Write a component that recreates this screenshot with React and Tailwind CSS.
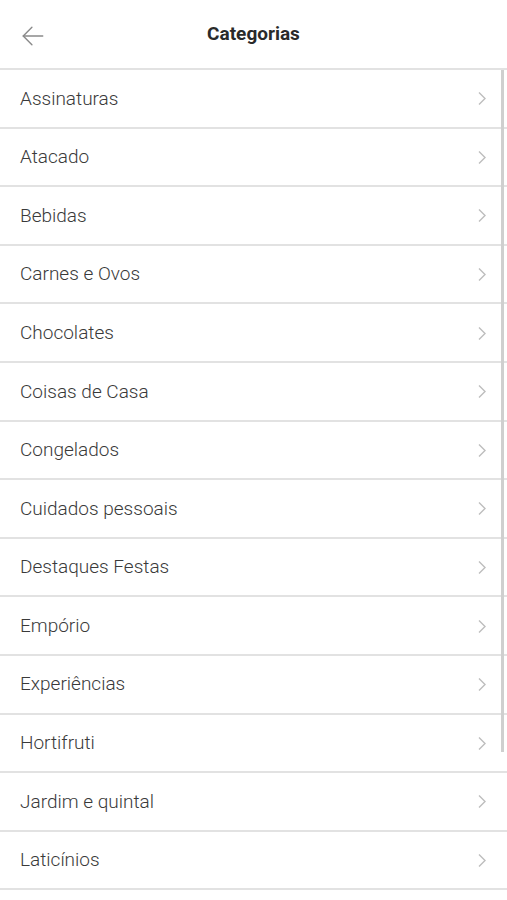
import React from "react";

const categories = [
  "Assinaturas",
  "Atacado",
  "Bebidas",
  "Carnes e Ovos",
  "Chocolates",
  "Coisas de Casa",
  "Congelados",
  "Cuidados pessoais",
  "Destaques Festas",
  "Empório",
  "Experiências",
  "Hortifruti",
  "Jardim e quintal",
  "Laticínios",
];

const App = () => {
  return (
    <div className="relative h-[900px] w-[507px] overflow-hidden bg-white font-['Roboto',sans-serif]">
      {/* Header */}
      <div className="relative flex h-[70px] items-center justify-center border-b-2 border-[#e2e2e2] pt-[1px]">
        <button className="absolute left-[20px] top-[23px] text-[#8a8a8a]">
          <svg width="26" height="26" viewBox="0 0 24 24" fill="none" stroke="currentColor" strokeWidth="1.3" strokeLinecap="round" strokeLinejoin="round">
            <path d="M21 12H3" />
            <path d="M11 4l-8 8 8 8" />
          </svg>
        </button>
        <h1 className="text-[19px] font-bold text-[#2a2a2a]">Categorias</h1>
      </div>

      {/* List */}
      <ul>
        {categories.map((c) => (
          <li
            key={c}
            className="flex h-[58.6px] items-center justify-between border-b-2 border-[#e2e2e2] pl-[20px] pr-[20px] pt-[1px]"
          >
            <span className="text-[19px] font-light text-[#3a3a3a]">{c}</span>
            <svg width="10" height="15" viewBox="0 0 10 15" fill="none" stroke="#bdbdbd" strokeWidth="1.4">
              <path d="M2 1.5l6 6-6 6" />
            </svg>
          </li>
        ))}
      </ul>

      {/* Scrollbar */}
      <div className="absolute left-[501px] top-[70px] h-[682px] w-[3px] bg-[#cfcfcf]" />
    </div>
  );
};

export default App;
